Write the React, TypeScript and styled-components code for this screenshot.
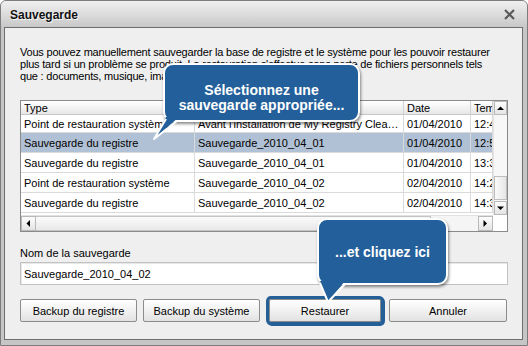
import styled, { createGlobalStyle } from "styled-components";

const GlobalStyle = createGlobalStyle`
  html, body {
    margin: 0;
    padding: 0;
    background: #ffffff;
  }
  * {
    box-sizing: border-box;
  }
`;

const FONT = `"Liberation Sans", Arial, sans-serif`;

const Window = styled.div`
  position: relative;
  width: 528px;
  height: 346px;
  display: flex;
  flex-direction: column;
  border: 1px solid #7c7c7c;
  border-radius: 6px 6px 0 0;
  background: #c6c6c6;
  font-family: ${FONT};
  font-size: 11px;
  color: #000;
  overflow: hidden;
`;

const TitleBar = styled.div`
  height: 26px;
  flex: none;
  display: flex;
  align-items: center;
  justify-content: space-between;
  padding: 0 12px 0 9px;
  background: linear-gradient(#f0f0f0 0%, #dedede 45%, #c8c8c8 100%);
`;

const Title = styled.div`
  font-size: 12px;
  font-weight: bold;
  color: #111;
  text-shadow: 1px 1px 0 rgba(255, 255, 255, 0.8);
  padding-top: 2px;
`;

const Body = styled.div`
  flex: 1;
  display: flex;
  flex-direction: column;
  margin: 0 4px 5px 3px;
  padding: 18px 14px 0 15px;
  background: #efefef;
  border: 1px solid #6e6e6e;
`;

const Intro = styled.p`
  margin: 0;
  line-height: 12px;
  font-size: 11px;
  letter-spacing: -0.2px;
  white-space: nowrap;
`;

const Table = styled.div`
  margin-top: 18px;
  height: 132px;
  display: grid;
  grid-template-columns: 1fr 14px;
  grid-template-rows: 1fr 16px;
  border: 1px solid #8a8a8a;
  background: #fff;
`;

const Rows = styled.div`
  display: flex;
  flex-direction: column;
  overflow: hidden;
`;

const Row = styled.div<{ $h: number; $selected?: boolean }>`
  height: ${(p) => p.$h}px;
  flex: none;
  display: grid;
  grid-template-columns: 174px 209px 67px 1fr;
  background: ${(p) => (p.$selected ? "#b1c1d5" : "#ffffff")};
`;

const HeadCell = styled.div`
  display: flex;
  align-items: center;
  padding-left: 3px;
  white-space: nowrap;
  overflow: hidden;
  background: linear-gradient(#ffffff, #f4f4f4 50%, #e6e6e6);
  border-right: 1px solid #d2d2d2;
  border-bottom: 1px solid #c8c8c8;
`;

const Cell = styled.div`
  display: flex;
  align-items: center;
  padding-left: 3px;
  white-space: nowrap;
  overflow: hidden;
  border-right: 1px solid #dadada;
  border-bottom: 1px solid #dadada;

  span {
    min-width: 0;
    overflow: hidden;
    text-overflow: ellipsis;
  }
`;

const VScroll = styled.div`
  display: flex;
  flex-direction: column;
  background: #f7f7f7;
  border-left: 1px solid #e4e4e4;
`;

const ScrollButton = styled.div<{ $w?: number; $h?: number }>`
  flex: none;
  width: ${(p) => (p.$w ? `${p.$w}px` : "auto")};
  height: ${(p) => (p.$h ? `${p.$h}px` : "auto")};
  display: flex;
  align-items: center;
  justify-content: center;
  background: linear-gradient(#fdfdfd, #e4e4e4);
  border: 1px solid #b9b9b9;
`;

const Track = styled.div`
  flex: 1;
`;

const VThumb = styled.div`
  height: 24px;
  flex: none;
  margin-bottom: 1px;
  background: linear-gradient(90deg, #fafafa, #e6e6e6);
  border: 1px solid #bdbdbd;
`;

const HScroll = styled.div`
  display: flex;
  background: #f5f5f5;
  border-top: 1px solid #e2e2e2;
`;

const HThumb = styled.div`
  width: 395px;
  flex: none;
  background: linear-gradient(#fbfbfb, #e8e8e8);
  border: 1px solid #c4c4c4;
  border-left: none;
`;

const Corner = styled.div`
  background: #ffffff;
`;

const Label = styled.div`
  margin-top: 15px;
  line-height: 13px;
`;

const NameInput = styled.div`
  margin-top: 2px;
  height: 23px;
  display: flex;
  align-items: center;
  padding-left: 3px;
  background: #fff;
  border: 1px solid #c2c2c2;
  box-shadow: inset 1px 1px 0 #e8e8e8;
`;

const Buttons = styled.div`
  margin-top: 14px;
  display: flex;
`;

const Button = styled.div<{ $w: number; $ml?: number; $focus?: boolean }>`
  width: ${(p) => p.$w}px;
  margin-left: ${(p) => p.$ml ?? 0}px;
  height: 23px;
  display: flex;
  align-items: center;
  justify-content: center;
  background: linear-gradient(#ffffff, #f1f1f1 50%, #e2e2e2);
  border: 1px solid #8c8c8c;
  border-radius: 2px;
  box-shadow: ${(p) => (p.$focus ? "0 0 0 3px #245f98, 1px 1px 0 3px #245f98" : "none")};
`;

const Bubble = styled.div<{ $x: number; $y: number; $w: number; $h: number; $pt: number }>`
  position: absolute;
  left: ${(p) => p.$x}px;
  top: ${(p) => p.$y}px;
  width: ${(p) => p.$w}px;
  height: ${(p) => p.$h}px;
  padding-top: ${(p) => p.$pt}px;
  background: #23609b;
  border: 2px solid #ffffff;
  border-radius: 10px;
  box-shadow: 1px 2px 3px rgba(0, 0, 0, 0.45);
  color: #ffffff;
  font-family: ${FONT};
  font-weight: bold;
  font-size: 14px;
  line-height: 15px;
  text-align: center;
  z-index: 2;
`;

const Tail = styled.svg<{ $x: number; $y: number }>`
  position: absolute;
  left: ${(p) => p.$x}px;
  top: ${(p) => p.$y}px;
  z-index: 3;
  overflow: visible;
`;

const Arrow = ({ dir }: { dir: "up" | "down" | "left" | "right" }) => {
  const pts = {
    up: "0,4 7,4 3.5,0.5",
    down: "0,0.5 7,0.5 3.5,4",
    left: "4,0 4,7 0.5,3.5",
    right: "0.5,0 0.5,7 4,3.5",
  }[dir];
  const vertical = dir === "up" || dir === "down";
  return (
    <svg width={vertical ? 7 : 5} height={vertical ? 5 : 7}>
      <polygon points={pts} fill="#000" />
    </svg>
  );
};

const rows = [
  {
    type: "Point de restauration système",
    name: "Avant l'installation de My Registry Cleaner",
    date: "01/04/2010",
    time: "12:45:10",
  },
  {
    type: "Sauvegarde du registre",
    name: "Sauvegarde_2010_04_01",
    date: "01/04/2010",
    time: "12:52:31",
    selected: true,
  },
  {
    type: "Sauvegarde du registre",
    name: "Sauvegarde_2010_04_01",
    date: "01/04/2010",
    time: "13:34:02",
  },
  {
    type: "Point de restauration système",
    name: "Sauvegarde_2010_04_02",
    date: "02/04/2010",
    time: "14:21:47",
  },
  {
    type: "Sauvegarde du registre",
    name: "Sauvegarde_2010_04_02",
    date: "02/04/2010",
    time: "14:33:18",
  },
];

const App = () => {
  return (
    <>
      <GlobalStyle />
      <Window>
        <TitleBar>
          <Title>Sauvegarde</Title>
          <svg width="11" height="11" viewBox="0 0 11 11">
            <path d="M1 1 L10 10 M10 1 L1 10" stroke="#5a5a5a" strokeWidth="2.2" />
          </svg>
        </TitleBar>

        <Body>
          <Intro>
            Vous pouvez manuellement sauvegarder la base de registre et le système pour les pouvoir restaurer
            <br />
            plus tard si un problème se produit. La restauration s'effectue sans perte de fichiers personnels tels
            <br />
            que : documents, musique, images, etc.
          </Intro>

          <Table>
            <Rows>
              <Row $h={14}>
                <HeadCell>Type</HeadCell>
                <HeadCell>Nom</HeadCell>
                <HeadCell>Date</HeadCell>
                <HeadCell>Temps</HeadCell>
              </Row>
              {rows.map((r, i) => (
                <Row key={i} $h={i === 0 ? 18 : 20} $selected={r.selected}>
                  <Cell>{r.type}</Cell>
                  <Cell>
                    <span>{r.name}</span>
                  </Cell>
                  <Cell>{r.date}</Cell>
                  <Cell>{r.time}</Cell>
                </Row>
              ))}
            </Rows>
            <VScroll>
              <ScrollButton $h={14}>
                <Arrow dir="up" />
              </ScrollButton>
              <Track />
              <VThumb />
              <ScrollButton $h={14}>
                <Arrow dir="down" />
              </ScrollButton>
            </VScroll>
            <HScroll>
              <ScrollButton $w={15}>
                <Arrow dir="left" />
              </ScrollButton>
              <HThumb />
              <Track />
              <ScrollButton $w={15}>
                <Arrow dir="right" />
              </ScrollButton>
            </HScroll>
            <Corner />
          </Table>

          <Label>Nom de la sauvegarde</Label>
          <NameInput>Sauvegarde_2010_04_02</NameInput>

          <Buttons>
            <Button $w={117}>Backup du registre</Button>
            <Button $w={117} $ml={6}>
              Backup du système
            </Button>
            <Button $w={112} $ml={9} $focus>
              Restaurer
            </Button>
            <Button $w={118} $ml={8}>
              Annuler
            </Button>
          </Buttons>
        </Body>

        <Bubble $x={162} $y={62} $w={197} $h={59} $pt={18}>
          Sélectionnez une
          <br />
          sauvegarde appropriée...
        </Bubble>
        <Tail $x={152} $y={116} width="26" height="24">
          <polygon points="13,0 26,0 1,22" fill="#23609b" />
          <path d="M13,2 L1,22 L24,4" fill="none" stroke="#ffffff" strokeWidth="2" strokeLinejoin="round" />
        </Tail>

        <Bubble $x={316} $y={217} $w={131} $h={67} $pt={25}>
          ...et cliquez ici
        </Bubble>
        <Tail $x={316} $y={280} width="30" height="24">
          <polygon points="3,0 28,0 11,21" fill="#23609b" />
          <path d="M3,2 L11,21 L28,3" fill="none" stroke="#ffffff" strokeWidth="2" strokeLinejoin="round" />
        </Tail>
      </Window>
    </>
  );
};

export default App;
